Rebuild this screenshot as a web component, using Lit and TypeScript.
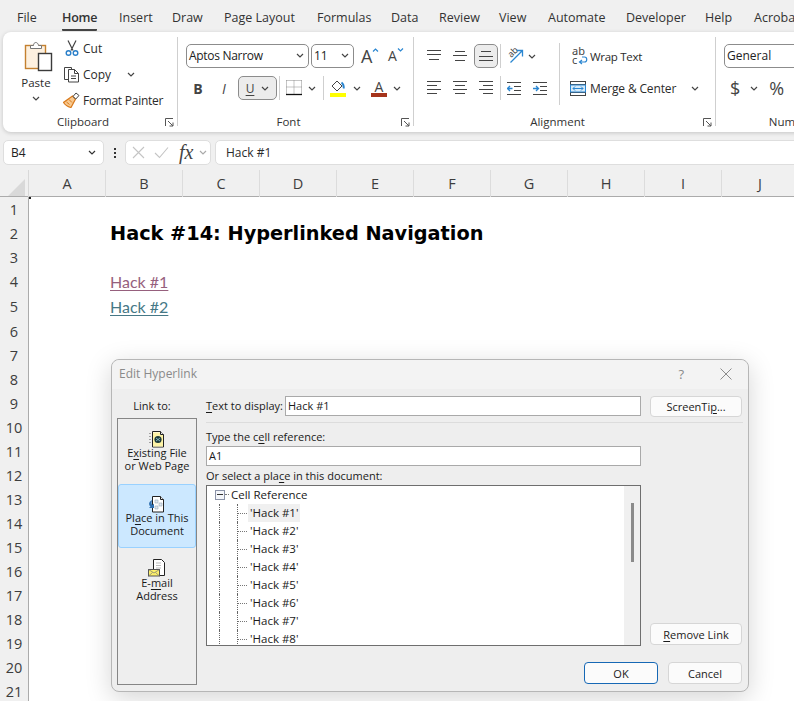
import { LitElement, html, svg, css } from "lit";
import { customElement } from "lit/decorators.js";

const chev = (c = "#444") => html`<svg class="chev" width="8" height="5" viewBox="0 0 8 5"><path d="M1 1l3 3 3-3" fill="none" stroke=${c} stroke-width="1.2"/></svg>`;
const launcher = () => html`<svg class="launch" width="9" height="9" viewBox="0 0 9 9"><path d="M.5 8V.5H8M3 3l5 5M8 4.5V8H4.5" fill="none" stroke="#555" stroke-width="1"/></svg>`;
const lines = (rows: [number, number][], y: number[]) => html`<svg width="16" height="16" viewBox="0 0 16 16">${rows.map((r, i) => svg`<rect x=${r[0]} y=${y[i]} width=${r[1]} height="1" fill="#444"></rect>`)}</svg>`;

const pasteIcon = html`<svg width="30" height="32" viewBox="0 0 30 32"><rect x="1.5" y="5.5" width="20" height="23" fill="#fdf0df" stroke="#c4802f" stroke-width="1.4"/><path d="M6.5 8.5V5.5h3c0-4 4.5-4 5 0h3v3z" fill="#fff" stroke="#777"/><rect x="14.5" y="13.5" width="13" height="17" fill="#fff" stroke="#3b3b3b" stroke-width="1.4"/></svg>`;
const cutIcon = html`<svg width="14" height="17" viewBox="0 0 14 17"><path d="M3 .5l5 10M11 .5l-5 10" fill="none" stroke="#444" stroke-width="1.2"/><circle cx="3.5" cy="13" r="2.3" fill="none" stroke="#2a7fc9" stroke-width="1.4"/><circle cx="10.5" cy="13" r="2.3" fill="none" stroke="#2a7fc9" stroke-width="1.4"/></svg>`;
const copyIcon = html`<svg width="17" height="17" viewBox="0 0 17 17"><path d="M5.5 13.5h-4V1.5h7v2" fill="none" stroke="#444"/><path d="M5.5 3.5h6l4 4v8.500h-10z" fill="#fff" stroke="#444"/><path d="M11.500 3.500v4h4M8 10h5M8 12.500h5" fill="none" stroke="#444"/></svg>`;
const painterIcon = html`<svg width="17" height="16" viewBox="0 0 17 16"><path d="M9.500 4l3 3-4.500 8.500c-2.500-.5-5.500-2-7.500-5z" fill="#f8c98f" stroke="#d9791b" stroke-width="1.200"/><path d="M3.500 10l3 2.500M6 7.500l3 3" stroke="#d9791b"/><path d="M10 4.500l3-3.500 3 2.500-3.200 3.500z" fill="#fff" stroke="#444"/></svg>`;
const growIcon = (size: string, up: boolean) => html`<span class=${"ga " + size}>A<svg width="7" height="4" viewBox="0 0 7 4"><path d=${up ? "M1 3.500l2.500-2.500 2.500 2.500" : "M1 .5l2.500 2.500 2.500-2.500"} fill="none" stroke="#2a86d1" stroke-width="1.200"/></svg></span>`;
const bordersIcon = html`<svg width="16" height="16" viewBox="0 0 16 16"><path d="M.5.500h15M.5.500v13M15.500.500v13M8 .5v13M.5 7h15" fill="none" stroke="#8a8a8a" stroke-dasharray="1 1"/><path d="M0 14.500h16" stroke="#111" stroke-width="1.300"/></svg>`;
const fillIcon = html`<svg width="16" height="17" viewBox="0 0 16 17"><path d="M7 1.500l5 5-5 5-5-5z" fill="#fff" stroke="#444" transform="translate(0 -.5)"/><path d="M11.500 2.500c2 1.500 2.500 3.500 2.300 6" fill="none" stroke="#2a86d1" stroke-width="1.800"/><rect y="13" width="16" height="4" fill="#ffff00"/></svg>`;
const orientIcon = html`<svg width="18" height="18" viewBox="0 0 18 18"><text x="1" y="9" font-family="Noto Sans" font-size="9" fill="#444" transform="rotate(-45 5 6)">ab</text><path d="M3.500 15.500L15 4M9.500 3.500H15.500V9.500" fill="none" stroke="#2a86d1" stroke-width="1.300"/></svg>`;
const indentIcon = (left: boolean) => html`<svg width="15" height="13" viewBox="0 0 15 13"><path d="M0 .5h14M7 4.500h7M7 8.500h7M0 12.500h14" stroke="#444"/><path d=${left ? "M5.500 6.500H.5M3 4L.5 6.500 3 9" : "M0 6.500h5M3 4l2.500 2.500L3 9"} fill="none" stroke="#2a86d1" stroke-width="1.300"/></svg>`;
const wrapIcon = html`<svg width="16" height="18" viewBox="0 0 16 18"><text x="0" y="8" font-family="Noto Sans" font-size="11" fill="#444">ab</text><text x="0" y="17" font-family="Noto Sans" font-size="11" fill="#444">c</text><path d="M8 15h4.500c3 0 3-5 0-5H10M10 13l-2.500 2 2.500 2" fill="none" stroke="#2a86d1" stroke-width="1.200"/></svg>`;
const mergeIcon = html`<svg width="16" height="15" viewBox="0 0 16 15"><rect x=".5" y=".5" width="15" height="14" fill="#fff" stroke="#444"/><path d="M0 3.500h16M0 11.500h16" stroke="#444"/><rect x=".5" y="4" width="15" height="7" fill="#d7ebfa" stroke="#2a86d1"/><path d="M3 7.500h10M5 5.500l-2 2 2 2M11 5.500l2 2-2 2" fill="none" stroke="#2a86d1"/></svg>`;
const xIcon = html`<svg width="13" height="13" viewBox="0 0 13 13"><path d="M1 1l11 11M12 1L1 12" stroke="#c4c4c4" stroke-width="1.100"/></svg>`;
const checkIcon = html`<svg width="15" height="13" viewBox="0 0 15 13"><path d="M1 7l4.500 4.500L14 1.500" fill="none" stroke="#c4c4c4" stroke-width="1.100"/></svg>`;
const closeIcon = html`<svg width="12" height="12" viewBox="0 0 12 12"><path d="M.5.500l11 11M11.500.500l-11 11" stroke="#8c8c8c"/></svg>`;
const doc = svg`<path d="M4.500 1.500h8l3 3v12.500h-11z" fill="#fff" stroke="#222"/><path d="M12.500 1.500v3h3" fill="#eee" stroke="#222"/>`;
const fileIcon = html`<svg width="18" height="18" viewBox="0 0 18 18">${doc}<path d="M5 2.500h7v2.500h3v1H5zM5 6h10v10.500H5z" fill="#fdf3a6"/><path d="M2 3v1M2 6v1M2 9v1M2 12v1" stroke="#555"/><circle cx="10" cy="9.500" r="3.600" fill="#1c3a3a"/><path d="M8 8l4 3M8 11l4-3" stroke="#9ccfd8" stroke-width=".8"/></svg>`;
const placeIcon = html`<svg width="18" height="18" viewBox="0 0 18 18">${doc}<path d="M7 5h3v3H7zM11 8h3v3h-3zM7 11h3v3H7z" fill="#dfe8ef" stroke="#9ab" stroke-width=".6"/><path d="M4.500 5C1 6 0 9.500 2.500 11.500L1 13h5V8.500L4.500 10C3 9 3.500 6.500 4.500 5z" fill="#2f6fb0"/></svg>`;
const mailIcon = html`<svg width="18" height="18" viewBox="0 0 18 18"><path d="M5.500.5h8l3 3v13h-11z" fill="#fff" stroke="#222"/><path d="M8 4h5M8 6.500h5M8 9h5" stroke="#bbb"/><rect x=".5" y="10.500" width="11" height="6.500" fill="#fdf06a" stroke="#555"/><path d="M.5 10.500l5.500 3.500 5.500-3.500M.5 17l4-3.500M11.500 17l-4-3.500" fill="none" stroke="#777" stroke-width=".7"/></svg>`;

const tabs = ["File", "Home", "Insert", "Draw", "Page Layout", "Formulas", "Data", "Review", "View", "Automate", "Developer", "Help", "Acrobat"];
const cols = "ABCDEFGHIJ".split("");
const rows = Array.from({ length: 21 }, (_, i) => i + 1);
const hacks = [1, 2, 3, 4, 5, 6, 7, 8];

@customElement("app-root")
export class AppRoot extends LitElement {
  static styles = css`
    :host { display: block; width: 794px; height: 701px; overflow: hidden; position: relative; background: #f0f0f0; font-family: "Open Sans", "Noto Sans", sans-serif; color: #2b2b2b; font-size: 12px; }
    svg { display: block; flex: none; }
    u { text-underline-offset: 1.5px; }
    .tabs { height: 32px; display: grid; grid-template-columns: 45px 57px 53px 52px 93px 74px 48px 60px 49px 78px 79px 49px 60px; padding-left: 17px; align-items: start; font-size: 12.5px; white-space: nowrap; color: #333; }
    .tab { padding-top: 9px; }
    .tab span { display: inline-block; height: 20px; line-height: 17px; }
    .tab.on span { border-bottom: 2px solid #444; font-weight: 600; border-radius: 1px; letter-spacing: -.25px; }

    .ribbon { height: 100px; margin-left: 3px; width: 900px; background: #fff; border-radius: 8px 0 0 8px; box-shadow: 0 1px 4px rgba(0,0,0,.18); display: flex; align-items: flex-start; padding-top: 5px; box-sizing: border-box; }
    .group { height: 89px; display: flex; flex-direction: column; border-right: 1px solid #cfcfcf; flex: none; box-sizing: border-box; }
    .g-clip { width: 175px; }
    .g-font { width: 236px; padding-left: 8px; }
    .g-align { width: 302px; padding-left: 8px; }
    .g-num { width: 150px; padding-left: 8px; border-right: 0; }
    .g-body { height: 76px; flex: none; }
    .g-label { height: 18px; margin-bottom: -5px; display: grid; grid-template-columns: 1fr auto 1fr; align-items: center; line-height: 18px; color: #333; font-size: 11.5px; }
    .g-label span { grid-column: 2; margin-right: 14px; }
    .g-label svg { grid-column: 3; justify-self: end; margin-right: 3px; }
    .g-font .g-label, .g-align .g-label { margin-left: -8px; }
    .g-num .g-label { margin-left: -8px; }
    .g-num .g-label span { margin-right: 0; }

    .clip-body { display: flex; }
    .paste { width: 32px; margin-left: 17px; padding-top: 3px; display: flex; flex-direction: column; align-items: center; font-size: 11.5px; }
    .paste svg { align-self: flex-start; margin-left: 4px; }
    .paste span { line-height: 16px; margin-top: 3px; }
    .paste .chev { margin-top: 5px; margin-left: 0; align-self: center; }
    .clip-list { margin-left: 11px; margin-top: -1px; display: flex; flex-direction: column; }
    .clip-row { height: 26px; display: flex; align-items: center; white-space: nowrap; }
    .clip-ic { width: 20px; display: flex; justify-content: flex-start; flex: none; }
    .clip-ic.cut { padding-left: 2px; width: 18px; }
    .clip-row .chev { margin-left: 16px; }
    .narrow { letter-spacing: -.25px; }

    .rrow { display: flex; align-items: center; height: 24px; }
    .rrow.first { margin-top: 7px; margin-bottom: 8px; }
    .select { height: 24px; box-sizing: border-box; border: 1px solid #8c8c8c; border-radius: 5px; display: flex; align-items: center; justify-content: space-between; padding: 0 4px 1px 2px; background: #fff; color: #222; flex: none; white-space: nowrap; }
    .s-font { width: 123px; }
    .s-font span { letter-spacing: -.3px; }
    .s-size { width: 43px; margin-left: 2px; }
    .s-num { width: 120px; }
    .ga { display: flex; align-items: flex-start; color: #444; line-height: 24px; }
    .ga.big { font-size: 18px; margin-left: 7px; width: 27px; }
    .ga.small { font-size: 14px; width: 18px; }
    .ga svg { margin-top: 4px; margin-left: 0; }
    .fbtn { width: 24px; height: 24px; margin-right: 2px; display: flex; align-items: center; justify-content: center; flex: none; color: #444; font-size: 14px; }
    .fbtn.b { font-weight: 700; }
    .fbtn.i { font-style: italic; }
    .ubtn { width: 39px; height: 24px; box-sizing: border-box; background: #ececec; border: 1px solid #8c8c8c; border-radius: 5px; display: flex; align-items: center; justify-content: center; gap: 7px; flex: none; color: #444; }
    .sep { width: 1px; height: 24px; background: #cfcfcf; flex: none; margin: 0 6px 0 2px; }
    .r-chev { margin: 0 5px 0 6px; }
    .r-chev2 { margin: 0 10px 0 7px; }
    .r-chev3 { margin: 0 0 0 6px; }
    .fcolor { width: 16px; height: 17px; display: flex; flex-direction: column; align-items: center; font-size: 14px; line-height: 13px; color: #444; flex: none; }
    .fcolor i { display: block; width: 16px; height: 4px; background: #a5341c; }

    .align-body { display: flex; }
    .abtn { width: 24px; height: 24px; margin-right: 2px; display: flex; align-items: center; justify-content: center; flex: none; box-sizing: border-box; }
    .abtn.on { background: #ececec; border: 1px solid #8c8c8c; border-radius: 5px; }
    .a-left { width: 134px; flex: none; }
    .a-left .sep { margin-left: 0; }
    .a-vsep { width: 1px; height: 62px; margin: 6px 0 0 3px; background: #cfcfcf; flex: none; }
    .a-right { margin-left: 10px; }
    .orient { margin-left: 0; margin-right: 3px; }
    .ind { margin-right: 11px; }
    .wrapr { margin: 6px 0 0 2px; height: 26px; display: flex; align-items: center; gap: 2px; white-space: nowrap; }
    .wrapr span { font-size: 11.5px; letter-spacing: -.3px; }
    .merger { margin-top: 6px; height: 26px; display: flex; align-items: center; gap: 4px; white-space: nowrap; }
    .merger span { letter-spacing: -.15px; }
    .merger .chev { margin-left: 11px; }
    .numr { font-size: 18px; color: #444; display: flex; align-items: center; padding-left: 6px; }
    .numr .chev { margin: 0 11px 0 10px; }

    .fbar { height: 25px; margin: 8px 0 5px 3px; display: flex; }
    .fbox { background: #fff; border: 1px solid #dedede; border-radius: 5px; box-sizing: border-box; height: 25px; display: flex; align-items: center; flex: none; }
    .namebox { width: 101px; padding: 0 7px; justify-content: space-between; font-size: 12px; color: #222; }
    .kebab { width: 21px; display: flex; flex-direction: column; align-items: center; justify-content: center; gap: 2px; flex: none; }
    .kebab i { width: 2px; height: 2px; background: #333; display: block; }
    .fxbox { width: 86px; padding-left: 6px; gap: 9px; }
    .fx { font-family: "Liberation Serif", serif; font-style: italic; font-size: 20px; color: #444; margin-left: 1px; margin-right: -3px; }
    .formula { margin-left: 4px; width: 600px; padding-left: 10px; }

    .colhead { height: 27px; box-sizing: border-box; display: grid; grid-template-columns: 29px repeat(10, 77px); border-bottom: 1px solid #ababab; }
    .corner { border-right: 1px solid #d8d8d8; position: relative; display: flex; justify-content: flex-end; align-items: flex-end; padding: 0 3px 1px 0; }
    .corner::after { content: ""; position: absolute; right: -3px; bottom: -2px; width: 2px; height: 2px; background: #222; }
    .col { border-right: 1px solid #dcdcdc; text-align: center; font-size: 14.5px; line-height: 27px; color: #3d3d3d; box-sizing: border-box; }
    .sheet { background: #fff; height: 504px; overflow: hidden; }
    .srow { height: 24px; display: grid; grid-template-columns: 29px 77px 1fr; }
    .srow.tall { height: 25px; }
    .rhead { background: #f0f0f0; border-right: 1px solid #ababab; border-bottom: 1px solid #dcdcdc; box-sizing: border-box; text-align: center; font-size: 14.5px; line-height: 26px; color: #3d3d3d; }
    .cell { grid-column: 3; padding-left: 4px; white-space: nowrap; }
    .title { font-family: "DejaVu Sans", Verdana, sans-serif; font-weight: 700; font-size: 19.3px; color: #000; line-height: 26px; }
    .link { font-family: Lato, sans-serif; font-size: 16px; line-height: 26px; text-decoration: underline; text-underline-offset: 2px; }
    .fol { color: #96607d; }
    .hl { color: #467886; }

    .dialog { position: absolute; left: 111px; top: 359px; width: 638px; height: 333px; box-sizing: border-box; background: #eeeeee; border: 1px solid #b6b6b6; border-radius: 8px; box-shadow: 0 6px 26px rgba(0,0,0,.17); font-size: 11px; color: #1a1a1a; }
    .d-title { height: 29px; box-sizing: border-box; background: #f3f3f3; border-radius: 8px 8px 0 0; display: flex; align-items: center; padding: 0 16px 2px 7px; color: #8a8a8a; font-size: 12px; }
    .d-title .name { flex: 1; }
    .d-title .q { margin-right: 36px; font-size: 13px; }
    .d-body { display: flex; padding: 7px 0 0 5px; gap: 9px; }
    .d-left { width: 80px; flex: none; display: flex; flex-direction: column; }
    .linkto { height: 22px; line-height: 20px; text-align: center; padding-right: 10px; box-sizing: border-box; }
    .panel { height: 267px; box-sizing: border-box; border: 1px solid #858585; }
    .item { height: 65px; box-sizing: border-box; padding-top: 10px; display: flex; flex-direction: column; align-items: center; text-align: center; line-height: 13px; border: 1px solid transparent; }
    .item span { display: block; margin-top: -1px; }
    .item:first-child span { margin-top: -2px; }
    .item.on { background: #cce8ff; border-color: #99d1ff; border-radius: 3px; height: 64px; }
    .item.on span { margin-top: -2px; }
    .d-right { width: 537px; flex: none; }
    .d-r1 { display: flex; height: 21px; }
    .d-r1 label { width: 79px; flex: none; line-height: 20px; white-space: nowrap; }
    .input { height: 20px; box-sizing: border-box; background: #fff; border: 1px solid #a9a9a9; display: flex; align-items: center; padding: 0 0 1px 2px; flex: none; }
    .i-top { width: 356px; }
    .btn { width: 92px; height: 22px; box-sizing: border-box; background: #fbfbfb; border: 1px solid #d6d6d6; border-radius: 4px; display: flex; align-items: center; justify-content: center; flex: none; white-space: nowrap; }
    .d-r1 .btn { margin-left: 9px; height: 21px; }
    .rule { height: 1px; background: #dcdcdc; margin-top: 5px; }
    .d-main { display: flex; gap: 9px; }
    .d-mid { width: 435px; flex: none; }
    .lab1 { height: 23px; display: flex; align-items: flex-end; line-height: 16px; padding-bottom: 1px; box-sizing: border-box; }
    .lab2 { height: 19px; line-height: 20px; }
    .i-cell { width: 435px; }
    .tree { height: 161px; box-sizing: border-box; border: 1px solid #6e6e6e; background: #fff; display: flex; overflow: hidden; font-size: 11.5px; }
    .t-pane { flex: 1; overflow: hidden; }
    .t-row { height: 18px; display: flex; align-items: center; }
    .t-row.rootr { padding: 0 0 1px 8px; box-sizing: border-box; }
    .exp { width: 10px; height: 10px; box-sizing: border-box; border: 1px solid #8b93a8; background: #f4f6fa; display: flex; align-items: center; justify-content: center; flex: none; }
    .exp i { width: 6px; height: 1px; background: #333; display: block; }
    .hdash { width: 4px; border-top: 1px dotted #777; margin: 0 2px 0 0; flex: none; }
    .g1, .g2 { width: 0; height: 18px; border-left: 1px dotted #666; flex: none; }
    .g1 { margin-left: 12px; }
    .g2 { margin-left: 17px; }
    .bdash { width: 9px; border-top: 1px dotted #777; flex: none; }
    .leaf { padding: 0 2px; margin-left: 1px; line-height: 18px; white-space: nowrap; }
    .leaf.sel { background: #f0f0f0; }
    .scroll { width: 16px; background: #f0f0f0; flex: none; padding: 17px 0 0 7px; box-sizing: border-box; }
    .scroll i { display: block; width: 3px; height: 59px; background: #8b8b8b; }
    .d-side { display: flex; align-items: flex-end; padding-bottom: 1px; }
    .d-foot { display: flex; justify-content: flex-end; gap: 10px; margin-top: 16px; padding-right: 1px; }
    .d-foot .btn { width: 74px; }
    .btn.ok { border: 1.500px solid #1668b5; }
  `;

  private tree() {
    return html`<div class="tree"><div class="t-pane">
      <div class="t-row rootr"><span class="exp"><i></i></span><span class="hdash"></span><span>Cell Reference</span></div>
      ${hacks.map((n) => html`<div class="t-row"><span class="g1"></span><span class="g2"></span><span class="bdash"></span><span class=${n === 1 ? "leaf sel" : "leaf"}>'Hack #${n}'</span></div>`)}
    </div><div class="scroll"><i></i></div></div>`;
  }

  private dialog() {
    return html`<div class="dialog">
      <div class="d-title"><span class="name">Edit Hyperlink</span><span class="q">?</span>${closeIcon}</div>
      <div class="d-body">
        <div class="d-left">
          <div class="linkto">Link to:</div>
          <div class="panel">
            <div class="item">${fileIcon}<span>E<u>x</u>isting File<br>or Web Page</span></div>
            <div class="item on">${placeIcon}<span>Pl<u>a</u>ce in This<br>Document</span></div>
            <div class="item">${mailIcon}<span>E-<u>m</u>ail<br>Address</span></div>
          </div>
        </div>
        <div class="d-right">
          <div class="d-r1"><label><u>T</u>ext to display:</label><div class="input i-top">Hack #1</div><div class="btn">ScreenTi<u>p</u>...</div></div>
          <div class="rule"></div>
          <div class="d-main">
            <div class="d-mid">
              <div class="lab1"><span>Type the c<u>e</u>ll reference:</span></div>
              <div class="input i-cell">A1</div>
              <div class="lab2">Or select a pla<u>c</u>e in this document:</div>
              ${this.tree()}
            </div>
            <div class="d-side"><div class="btn"><u>R</u>emove Link</div></div>
          </div>
          <div class="d-foot"><div class="btn ok">OK</div><div class="btn">Cancel</div></div>
        </div>
      </div>
    </div>`;
  }

  private cellFor(r: number) {
    if (r === 2) return html`<div class="cell title">Hack #14: Hyperlinked Navigation</div>`;
    if (r === 4) return html`<div class="cell link fol">Hack #1</div>`;
    if (r === 5) return html`<div class="cell link hl">Hack #2</div>`;
    return "";
  }

  render() {
    const row4 = [1, 5, 9, 13];
    return html`
      <div class="tabs">${tabs.map((t) => html`<div class=${t === "Home" ? "tab on" : "tab"}><span>${t}</span></div>`)}</div>
      <div class="ribbon">
        <div class="group g-clip">
          <div class="g-body clip-body">
            <div class="paste">${pasteIcon}<span>Paste</span>${chev()}</div>
            <div class="clip-list">
              <div class="clip-row"><span class="clip-ic cut">${cutIcon}</span>Cut</div>
              <div class="clip-row"><span class="clip-ic">${copyIcon}</span>Copy${chev()}</div>
              <div class="clip-row narrow"><span class="clip-ic">${painterIcon}</span>Format Painter</div>
            </div>
          </div>
          <div class="g-label"><span>Clipboard</span>${launcher()}</div>
        </div>
        <div class="group g-font">
          <div class="g-body">
            <div class="rrow first">
              <div class="select s-font"><span>Aptos Narrow</span>${chev()}</div>
              <div class="select s-size"><span>11</span>${chev()}</div>
              ${growIcon("big", true)}${growIcon("small", false)}
            </div>
            <div class="rrow">
              <div class="fbtn b">B</div><div class="fbtn i">I</div>
              <div class="ubtn"><u>U</u>${chev()}</div>
              <div class="sep"></div>${bordersIcon}<span class="r-chev">${chev()}</span>
              <div class="sep"></div>${fillIcon}<span class="r-chev2">${chev()}</span>
              <div class="fcolor">A<i></i></div><span class="r-chev3">${chev()}</span>
            </div>
          </div>
          <div class="g-label"><span>Font</span>${launcher()}</div>
        </div>
        <div class="group g-align">
          <div class="g-body align-body">
            <div class="a-left">
              <div class="rrow first">
                <div class="abtn">${lines([[1, 14], [1, 14], [3, 10]], [2, 6, 11])}</div>
                <div class="abtn">${lines([[3, 10], [1, 14], [3, 10]], [3, 7, 12])}</div>
                <div class="abtn on">${lines([[3, 10], [1, 14], [1, 14]], [3, 8, 12])}</div>
                <div class="sep"></div>
                <span class="orient">${orientIcon}</span>${chev()}
              </div>
              <div class="rrow">
                <div class="abtn">${lines([[1, 14], [1, 10], [1, 14], [1, 10]], row4)}</div>
                <div class="abtn">${lines([[1, 14], [3, 10], [1, 14], [3, 10]], row4)}</div>
                <div class="abtn">${lines([[1, 14], [5, 10], [1, 14], [5, 10]], row4)}</div>
                <div class="sep"></div>
                <span class="ind">${indentIcon(true)}</span><span class="ind">${indentIcon(false)}</span>
              </div>
            </div>
            <div class="a-vsep"></div>
            <div class="a-right">
              <div class="wrapr">${wrapIcon}<span>Wrap Text</span></div>
              <div class="merger">${mergeIcon}<span>Merge &amp; Center</span>${chev()}</div>
            </div>
          </div>
          <div class="g-label"><span>Alignment</span>${launcher()}</div>
        </div>
        <div class="group g-num">
          <div class="g-body">
            <div class="rrow first"><div class="select s-num"><span>General</span></div></div>
            <div class="rrow numr"><span>$</span>${chev()}<span>%</span></div>
          </div>
          <div class="g-label"><span>Number</span></div>
        </div>
      </div>
      <div class="fbar">
        <div class="fbox namebox"><span>B4</span>${chev("#333")}</div>
        <div class="kebab"><i></i><i></i><i></i></div>
        <div class="fbox fxbox">${xIcon}${checkIcon}<span class="fx">fx</span>${chev("#aaa")}</div>
        <div class="fbox formula">Hack #1</div>
      </div>
      <div class="colhead">
        <div class="corner"><svg width="17" height="17" viewBox="0 0 17 17"><path d="M17 0v17H0z" fill="#d9d9d9"/></svg></div>
        ${cols.map((c) => html`<div class="col">${c}</div>`)}
      </div>
      <div class="sheet">
        ${rows.map((r) => html`<div class=${r === 4 || r === 5 ? "srow tall" : "srow"}><div class="rhead">${r}</div>${this.cellFor(r)}</div>`)}
      </div>
      ${this.dialog()}
    `;
  }
}
